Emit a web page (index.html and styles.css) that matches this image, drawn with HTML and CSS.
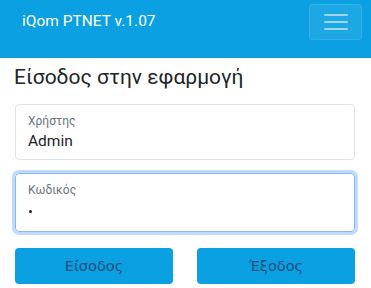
FILE: index.html
```html
<!DOCTYPE html>
<html lang="el">
<head>
  <meta charset="UTF-8">
  <title>iQom PTNET</title>
  <link rel="stylesheet" href="styles.css">
</head>
<body>

<header class="navbar">
  <span class="brand">iQom PTNET v.1.07</span>
  <button class="toggler" type="button">
    <span></span><span></span><span></span>
  </button>
</header>

<div class="container">
  <h1>Είσοδος στην εφαρμογή</h1>

  <form class="login">
    <div class="field">
      <label>Χρήστης</label>
      <div class="value">Admin</div>
    </div>

    <div class="field focus">
      <label>Κωδικός</label>
      <div class="value"><span class="dot"></span></div>
    </div>

    <div class="actions">
      <button type="button" class="btn">Είσοδος</button>
      <button type="button" class="btn">Έξοδος</button>
    </div>
  </form>
</div>

</body>
</html>
```

FILE: styles.css
```css
body {
  margin: 0;
  font-family: Roboto, "Liberation Sans", sans-serif;
  background: #fff;
  color: #212529;
}

.navbar {
  background: #0aa0e2;
  height: 58px;
  display: flex;
  align-items: flex-start;
  justify-content: space-between;
  padding: 0 9px 0 22px;
  box-sizing: border-box;
}

.brand {
  color: #fff;
  font-size: 15.5px;
  margin-top: 12px;
}

.toggler {
  margin-top: 4px;
  width: 53px;
  height: 36px;
  background: rgba(255,255,255,0.08);
  border: 1px solid rgba(255,255,255,0.1);
  border-radius: 4px;
  display: flex;
  flex-direction: column;
  align-items: center;
  justify-content: center;
  gap: 5px;
  padding: 0;
}

.toggler span {
  display: block;
  width: 24px;
  height: 2px;
  background: rgba(255,255,255,0.55);
  border-radius: 1px;
}

.container {
  padding: 0 16px 0 15px;
}

h1 {
  font-weight: 400;
  font-size: 21px;
  margin: 5px 0 13px -1px;
  line-height: 28px;
}

.field {
  border: 1px solid #dee2e6;
  border-radius: 4px;
  height: 56px;
  box-sizing: border-box;
  padding: 9px 12px 0;
  margin-bottom: 13px;
}

.field label {
  display: block;
  font-size: 12px;
  color: #6c757d;
  line-height: 14px;
}

.field .value {
  font-size: 15.5px;
  line-height: 20px;
  margin-top: 3px;
  height: 20px;
}

.field.focus {
  border-color: #86b7fe;
  box-shadow: 0 0 0 3px #c2dbfc;
  height: 59px;
}

.dot {
  display: inline-block;
  width: 3px;
  height: 3px;
  border-radius: 50%;
  background: #212529;
  margin: 10px 0 0 1px;
  vertical-align: top;
}

.actions {
  display: flex;
  justify-content: space-between;
  margin-top: 16px;
}

.btn {
  width: 158px;
  height: 36px;
  background: #0aa0e2;
  border: none;
  border-radius: 4px;
  color: #174f80;
  font-family: "DejaVu Sans", sans-serif;
  font-size: 14.5px;
  cursor: pointer;
}
```
